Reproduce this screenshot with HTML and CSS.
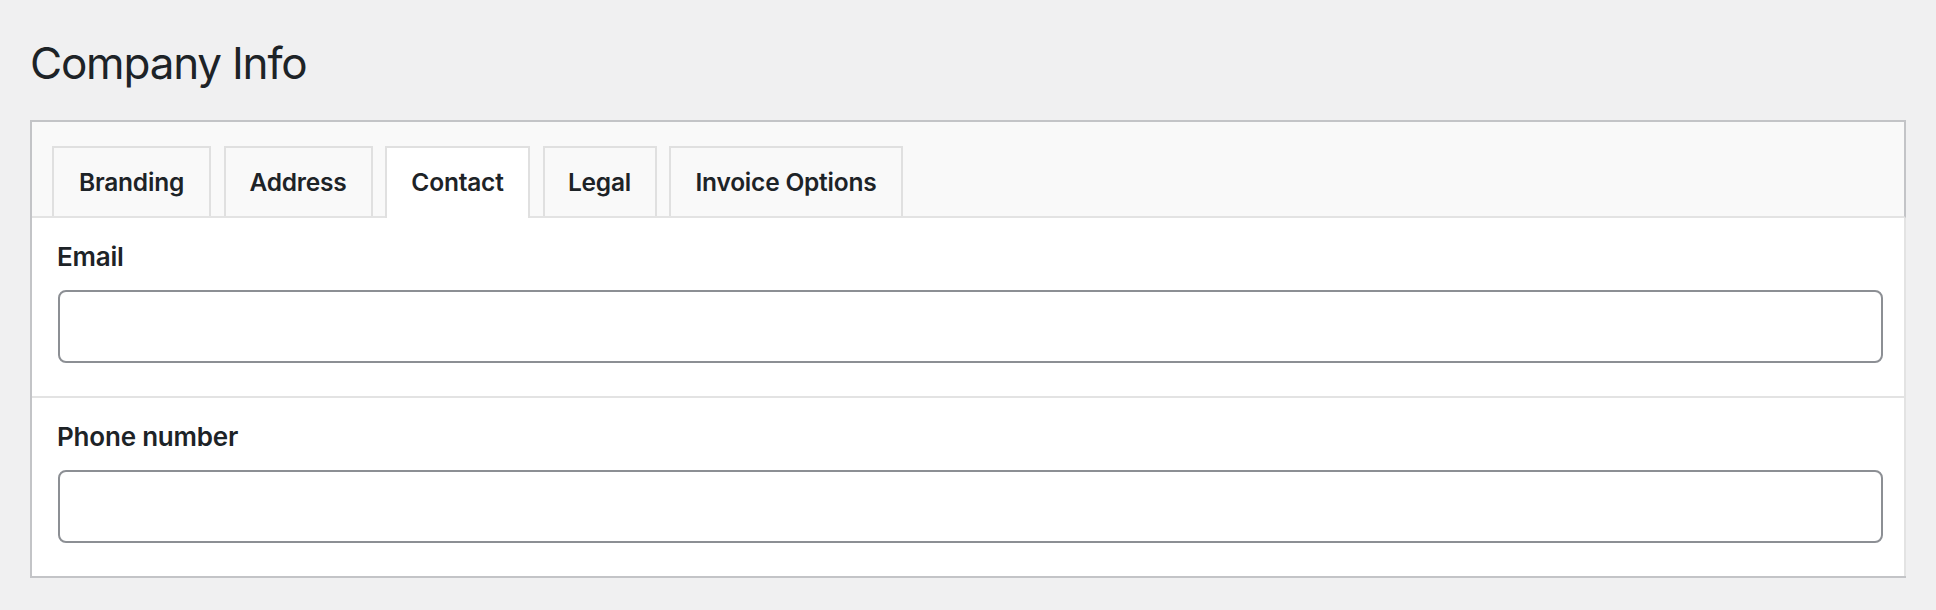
FILE: index.html
```html
<!DOCTYPE html>
<html lang="en">
<head>
<meta charset="utf-8">
<title>Company Info</title>
<link rel="stylesheet" href="styles.css">
</head>
<body>
<h1 class="page-title">Company Info</h1>
<div class="panel">
  <div class="tabs">
    <div class="tab tab-branding">Branding</div>
    <div class="tab tab-address">Address</div>
    <div class="tab tab-contact tab-active">Contact</div>
    <div class="tab tab-legal">Legal</div>
    <div class="tab tab-invoice">Invoice Options</div>
  </div>
  <div class="content">
    <div class="field">
      <label class="field-label" for="email">Email</label>
      <input class="field-input" id="email" type="text">
    </div>
    <div class="field">
      <label class="field-label" for="phone">Phone number</label>
      <input class="field-input" id="phone" type="text">
    </div>
  </div>
</div>
</body>
</html>
```

FILE: styles.css
```css
html, body {
  margin: 0;
  padding: 0;
  background: #f0f0f1;
  font-family: Inter, "Noto Sans", "Liberation Sans", sans-serif;
  color: #1d2327;
}

.page-title {
  margin: 35px 0 29px 30px;
  font-size: 44px;
  font-weight: 400;
  line-height: 56px;
  letter-spacing: -1.2px;
}

.panel {
  margin: 0 30px;
  border: 2px solid #c3c4c7;
  border-right: none;
  background: #fff;
}

.tabs {
  display: flex;
  gap: 12.5px;
  align-items: flex-end;
  padding: 24px 0 0 20px;
  background: #f9f9f9;
  border-bottom: 2px solid #e3e3e3;
  border-right: 2px solid #c3c4c7;
  height: 70px;
}

.tab {
  box-sizing: border-box;
  height: 70px;
  display: flex;
  align-items: center;
  justify-content: center;
  padding: 0;
  border: 2px solid #e0e0e0;
  border-bottom: none;
  background: #f9f9f9;
  font-size: 24.5px;
  font-weight: 600;
  letter-spacing: -0.2px;
  white-space: nowrap;
  color: #1d2327;
}

.tab-branding { width: 159px; }
.tab-address { width: 149px; }
.tab-contact { width: 145px; }
.tab-legal { width: 114px; }
.tab-invoice { width: 234px; }

.tab-active {
  background: #fff;
  height: 72px;
  padding-bottom: 2px;
  margin-bottom: -2px;
}

.content {
  border-right: 2px solid #e3e3e3;
}

.field {
  padding: 23px 21px 33px 26px;
  border-bottom: 2px solid #e3e3e3;
}

.field:last-child {
  border-bottom: none;
}

.field-label {
  display: block;
  font-size: 26px;
  font-weight: 600;
  line-height: 32px;
  letter-spacing: -0.2px;
  margin: 0 0 17px -1px;
}

.field-input {
  display: block;
  box-sizing: border-box;
  width: 100%;
  height: 73px;
  margin: 0;
  border: 2px solid #8c8f94;
  border-radius: 8px;
  background: #fff;
  font: inherit;
}
```
